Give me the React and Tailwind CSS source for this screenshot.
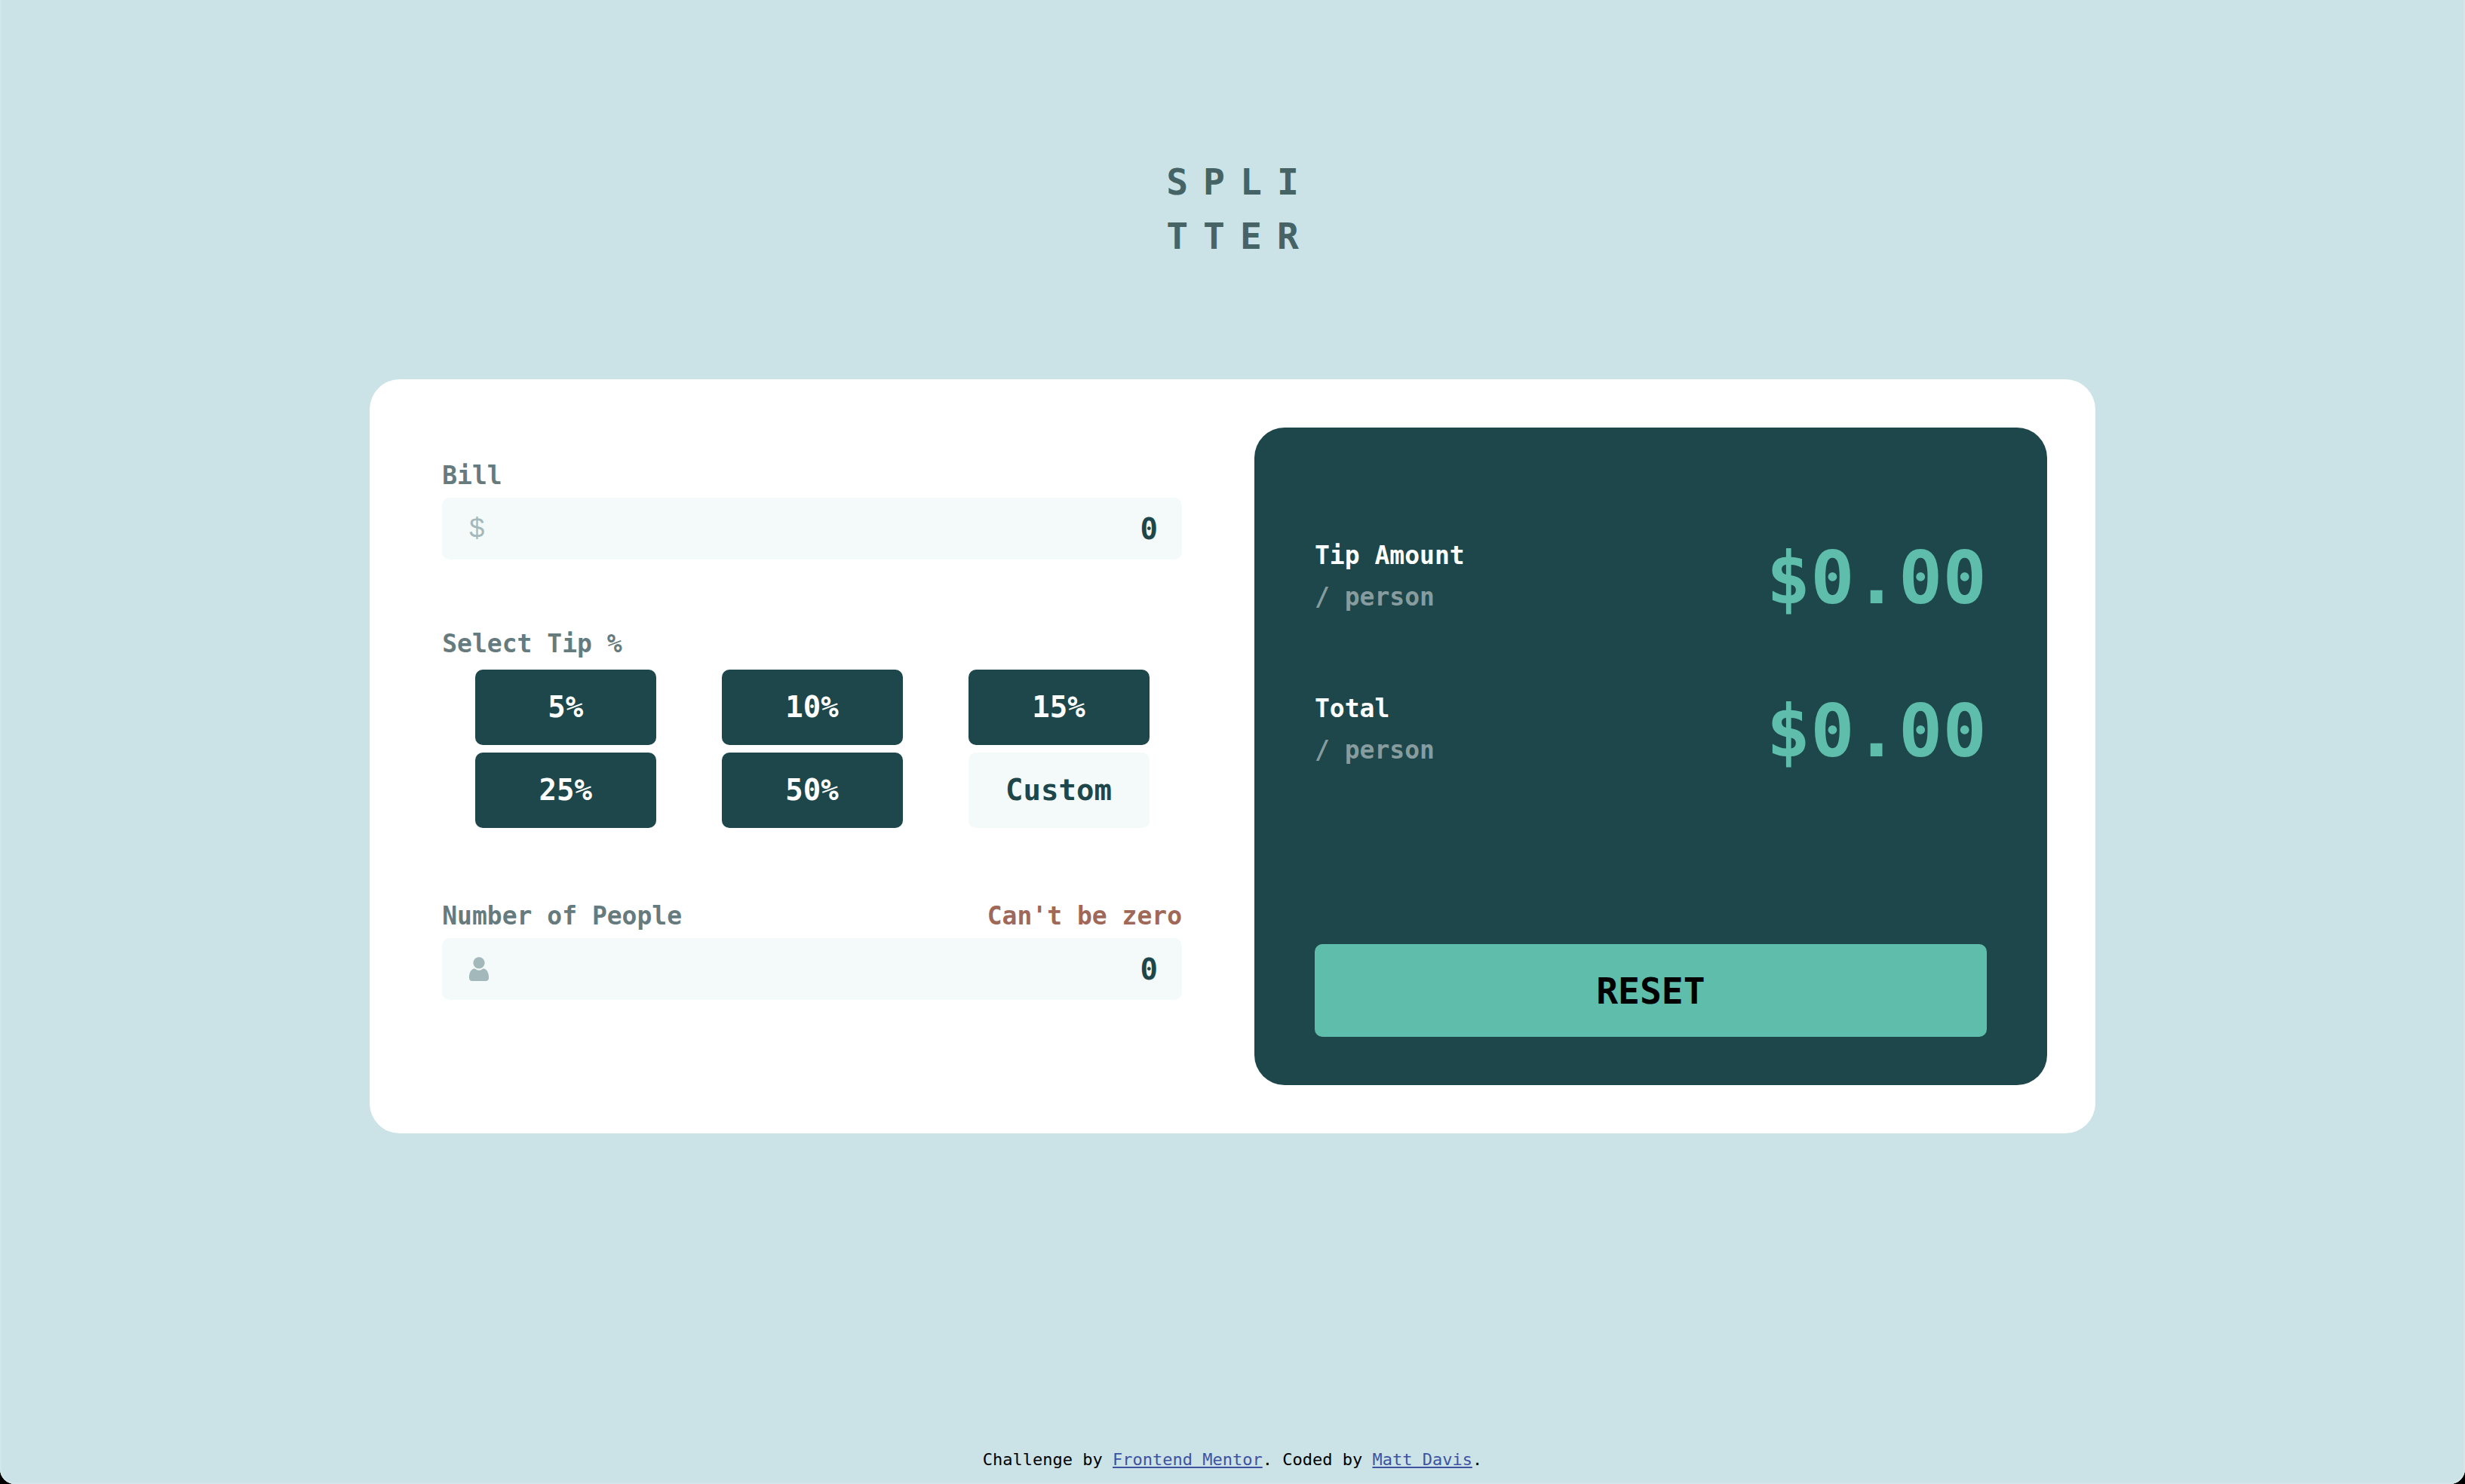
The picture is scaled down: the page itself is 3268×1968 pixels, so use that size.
import { useState } from "react";

const TIPS = [5, 10, 15, 25, 50];

function PersonIcon({ className }) {
  return (
    <svg className={className} viewBox="0 0 13 16" fill="currentColor" aria-hidden="true">
      <circle cx="6.5" cy="3.9" r="3.8" />
      <path d="M3.3 7.7C1.2 8 0 10.800 0 13.200v.9C0 15.200 .9 16 2 16h9c1.100 0 2-.8 2-1.900v-.9c0-2.400-1.200-5.200-3.300-5.500-.4 0-.8.1-1.100.4-.6.5-1.300.8-2.100.8s-1.500-.3-2.100-.8c-.3-.3-.7-.4-1.100-.4z" />
    </svg>
  );
}

function Field({ id, label, error, icon, value, onChange }) {
  return (
    <div>
      <div className="mb-[5px] flex justify-between text-[33px] leading-[48px] font-bold">
        <label htmlFor={id} className="text-[#657b7e]">{label}</label>
        {error && <span role="alert" className="text-[#a06858]">{error}</span>}
      </div>
      <div className="relative">
        <span className="pointer-events-none absolute inset-y-0 left-9 flex w-[26px] items-center text-[#a3b8bb]">
          {icon}
        </span>
        <input
          id={id}
          type="text"
          inputMode="decimal"
          value={value}
          onChange={(e) => onChange(e.target.value)}
          className="block h-[82px] w-full rounded-[10px] bg-[#f4fafa] pr-8 pl-24 text-right text-[39px] font-bold text-[#1d474a] outline-none"
        />
      </div>
    </div>
  );
}

function Result({ label, amount }) {
  return (
    <div className="flex items-center justify-between">
      <div className="text-[33px] leading-[55px] font-bold">
        <h2 className="text-white">{label}</h2>
        <p className="text-[#879c9f]">/ person</p>
      </div>
      <output className="pt-[6px] text-[97px] leading-[104px] font-bold text-[#5ebdab]">${amount.toFixed(2)}</output>
    </div>
  );
}

export default function App() {
  const [bill, setBill] = useState("0");
  const [people, setPeople] = useState("0");
  const [tip, setTip] = useState(0);

  const count = Number(people) || 0;
  const total = Number(bill) || 0;
  const tipEach = count > 0 ? (total * tip) / 100 / count : 0;
  const totalEach = count > 0 ? total / count + tipEach : 0;

  const reset = () => {
    setBill("0");
    setPeople("0");
    setTip(0);
  };

  return (
    <div className="bg-black">
      <div className="flex min-h-screen flex-col items-center rounded-b-[20px] bg-[#cbe3e6] font-['DejaVu_Sans_Mono',monospace] shadow-[inset_2px_0_#d3e7ea,inset_-2px_0_#d3e7ea,inset_0_-2px_#d3e7ea]">
        <h1 className="mt-[205px] pl-5 text-5xl leading-[72px] font-bold tracking-[20px] text-[#466466]">
          SPLI
          <br />
          TTER
        </h1>

        <main className="mt-[154px] grid w-[70%] grid-cols-[1045fr_1051fr] gap-16 rounded-[40px] bg-white p-16">
          <form className="px-8 pt-10" onSubmit={(e) => e.preventDefault()}>
            <Field
              id="bill"
              label="Bill"
              value={bill}
              onChange={setBill}
              icon={<span className="font-['Liberation_Sans',sans-serif] text-[36px] leading-none">$</span>}
            />

            <fieldset className="mt-[88px]">
              <legend className="mb-[10px] text-[33px] leading-[48px] font-bold text-[#657b7e]">
                Select Tip %
              </legend>
              <div className="grid grid-cols-3 justify-items-center gap-y-[10px] text-[39px] font-bold">
                {TIPS.map((t) => (
                  <button
                    key={t}
                    type="button"
                    onClick={() => setTip(t)}
                    className="h-[100px] w-60 rounded-[10px] bg-[#1d474a] text-white"
                  >
                    {t}%
                  </button>
                ))}
                <button type="button" className="h-[100px] w-60 rounded-[10px] bg-[#f4fafa] text-[#1d474a]">
                  Custom
                </button>
              </div>
            </fieldset>

            <div className="mt-[93px]">
              <Field
                id="people"
                label="Number of People"
                error={count > 0 ? "" : "Can't be zero"}
                value={people}
                onChange={setPeople}
                icon={<PersonIcon className="h-8 w-[26px]" />}
              />
            </div>
          </form>

          <section className="flex flex-col rounded-[40px] bg-[#1d474a] px-20 pt-[142px] pb-16">
            <Result label="Tip Amount" amount={tipEach} />
            <div className="mt-[93px]">
              <Result label="Total" amount={totalEach} />
            </div>
            <button
              type="button"
              onClick={reset}
              className="mt-[230px] h-[123px] rounded-[10px] bg-[#5ebdab] text-5xl font-bold text-black"
            >
              RESET
            </button>
          </section>
        </main>

        <footer className="mt-auto pb-4 text-[22px] leading-8 text-black">
          Challenge by{" "}
          <a href="#frontend-mentor" className="text-[#3e52a3] underline">Frontend Mentor</a>
          . Coded by{" "}
          <a href="#matt-davis" className="text-[#3e52a3] underline">Matt Davis</a>.
        </footer>
      </div>
    </div>
  );
}
